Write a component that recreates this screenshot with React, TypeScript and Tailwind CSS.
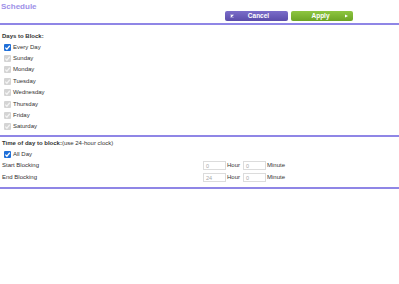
const days = ['Sunday', 'Monday', 'Tuesday', 'Wednesday', 'Thursday', 'Friday', 'Saturday'];

function Box({ disabled }: { disabled?: boolean }) {
  return (
    <span
      className={
        'inline-flex h-[7px] w-[7px] items-center justify-center rounded-[1px] ' +
        (disabled ? 'bg-[#d4d4d4]' : 'bg-[#1f6fd8]')
      }
    >
      <svg viewBox="0 0 8 8" className="h-[7px] w-[7px]">
        <path
          d="M1.5 4.2 L3.3 6 L6.6 2"
          fill="none"
          stroke={disabled ? '#f4f4f4' : '#ffffff'}
          strokeWidth="1.4"
        />
      </svg>
    </span>
  );
}

function Field({ value }: { value: string }) {
  return (
    <div className="flex h-[9px] w-[23px] items-center border border-[#dcdcdc] bg-white px-[2px] text-[5.5px] text-[#a8a8a8]">
      {value}
    </div>
  );
}

export default function App() {
  return (
    <div className="h-[284px] w-[399px] bg-white font-['Liberation_Sans',Arial,sans-serif] text-[6px] text-[#333]">
      <div className="flex h-[23px] items-start justify-between">
        <div className="pl-[1px] pt-[1px] text-[8px] font-bold text-[#9d90e8]">Schedule</div>
        <div className="mr-[46px] mt-[11px] flex gap-[3px]">
          <button className="flex h-[10px] w-[63px] items-center rounded-[2px] bg-gradient-to-b from-[#7b6dca] to-[#5b4caa] px-[5px] text-[6.5px] font-bold text-white">
            <svg viewBox="0 0 6 6" className="h-[4px] w-[4px]">
              <path d="M1 1 L5 5 M5 1 L1 5" stroke="#fff" strokeWidth="1.6" />
            </svg>
            <span className="flex-1 text-center">Cancel</span>
          </button>
          <button className="flex h-[10px] w-[62px] items-center rounded-[2px] bg-gradient-to-b from-[#8ec640] to-[#6ca424] px-[5px] text-[6.5px] font-bold text-white">
            <span className="flex-1 text-center">Apply</span>
            <svg viewBox="0 0 4 4" className="h-[4px] w-[3px]">
              <path d="M0 0 L4 2 L0 4 Z" fill="#fff" />
            </svg>
          </button>
        </div>
      </div>
      <div className="h-[2px] bg-[#8f86e6]" />

      <div className="px-[2px] pt-[7px]">
        <div className="flex h-[8px] items-center font-bold">Days to Block:</div>
        <div className="mt-[1.5px] flex h-[11.4px] items-center gap-[2px] pl-[2px]">
          <Box />
          <span>Every Day</span>
        </div>
        {days.map((d) => (
          <div key={d} className="flex h-[11.4px] items-center gap-[2px] pl-[2px]">
            <Box disabled />
            <span>{d}</span>
          </div>
        ))}
      </div>
      <div className="mt-[2px] h-[2px] bg-[#8f86e6]" />

      <div className="px-[2px] pt-[3px]">
        <div className="flex h-[8px] items-center">
          <span className="font-bold">Time of day to block:</span>(use 24-hour clock)
        </div>
        <div className="mt-[1px] flex h-[11px] items-center gap-[2px] pl-[2px]">
          <Box />
          <span>All Day</span>
        </div>
        <div className="flex h-[12px] items-center">
          <span className="w-[201px]">Start Blocking</span>
          <Field value="0" />
          <span className="ml-[1px] mr-[3px]">Hour</span>
          <Field value="0" />
          <span className="ml-[1px]">Minute</span>
        </div>
        <div className="flex h-[12px] items-center">
          <span className="w-[201px]">End Blocking</span>
          <Field value="24" />
          <span className="ml-[1px] mr-[3px]">Hour</span>
          <Field value="0" />
          <span className="ml-[1px]">Minute</span>
        </div>
      </div>
      <div className="mt-[3px] h-[2px] bg-[#8f86e6]" />
    </div>
  );
}
